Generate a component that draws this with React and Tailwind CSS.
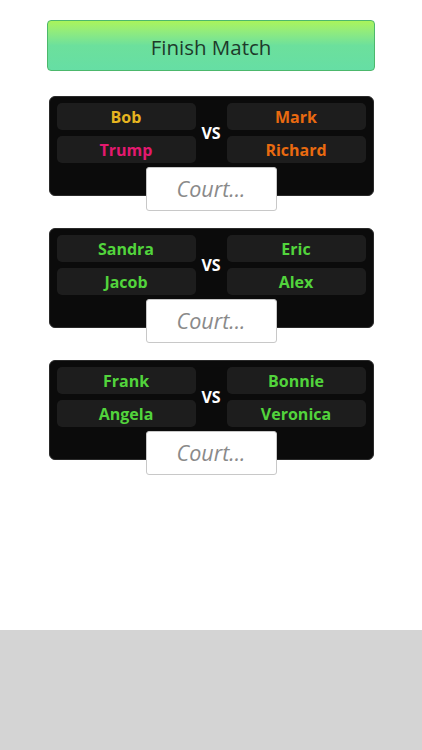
import React from 'react';

const matches = [
  {
    left: [
      { name: 'Bob', color: 'text-[#e6b520]' },
      { name: 'Trump', color: 'text-[#e3196f]' },
    ],
    right: [
      { name: 'Mark', color: 'text-[#e96a10]' },
      { name: 'Richard', color: 'text-[#e96a10]' },
    ],
  },
  {
    left: [
      { name: 'Sandra', color: 'text-[#52d43c]' },
      { name: 'Jacob', color: 'text-[#52d43c]' },
    ],
    right: [
      { name: 'Eric', color: 'text-[#52d43c]' },
      { name: 'Alex', color: 'text-[#52d43c]' },
    ],
  },
  {
    left: [
      { name: 'Frank', color: 'text-[#52d43c]' },
      { name: 'Angela', color: 'text-[#52d43c]' },
    ],
    right: [
      { name: 'Bonnie', color: 'text-[#52d43c]' },
      { name: 'Veronica', color: 'text-[#52d43c]' },
    ],
  },
];

const Player = ({ name, color }) => (
  <div className={`h-[27px] rounded-[5px] bg-[#1d1d1d] flex items-center justify-center text-[16px] font-bold ${color}`}>
    {name}
  </div>
);

const MatchCard = ({ match }) => (
  <div className="flex flex-col items-center">
    <div className="w-[325px] h-[100px] rounded-[6px] bg-[#0b0b0b] border border-[#2a2a2a] px-[7px] pt-[6px]">
      <div className="flex items-center">
        <div className="w-[139px] flex flex-col gap-[6px]">
          {match.left.map((p) => <Player key={p.name} {...p} />)}
        </div>
        <div className="flex-1 text-center text-white font-bold text-[16px]">VS</div>
        <div className="w-[139px] flex flex-col gap-[6px]">
          {match.right.map((p) => <Player key={p.name} {...p} />)}
        </div>
      </div>
    </div>
    <div className="-mt-[29px] w-[131px] h-[44px] bg-white border border-[#c8c8c8] rounded-[3px] flex items-center justify-center">
      <span className="italic text-[21.5px] text-[#8a8a8a]">Court...</span>
    </div>
  </div>
);

export default function App() {
  return (
    <div className="w-[422px] h-[750px] bg-white flex flex-col" style={{ fontFamily: '"Open Sans", "Noto Sans", sans-serif' }}>
      <div className="flex-1 flex flex-col items-center pt-[20px]">
        <button className="w-[328px] h-[51px] pt-[3px] rounded-[4px] border border-[#4cb86c] bg-gradient-to-b from-[#aaf45a] via-[#6ce09c] to-[#66dea4] text-[20.5px] text-[#1e3a2a]">
          Finish Match
        </button>
        <div className="mt-[25px] flex flex-col gap-[17px]">
          {matches.map((m, i) => <MatchCard key={i} match={m} />)}
        </div>
      </div>
      <div className="h-[120px] bg-[#d4d4d4]" />
    </div>
  );
}
